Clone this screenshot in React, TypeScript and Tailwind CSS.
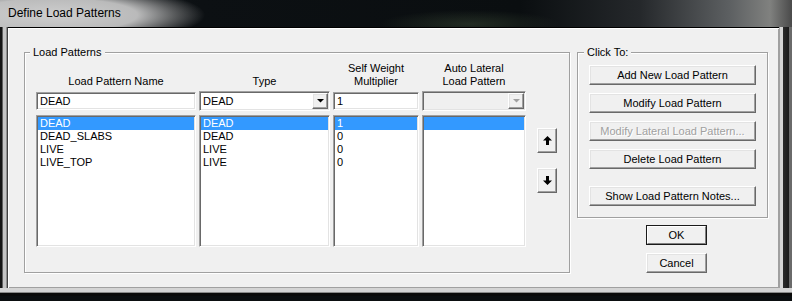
import React from "react";

const sunken =
  "border border-t-[#a0a0a0] border-l-[#a0a0a0] border-r-white border-b-white shadow-[inset_1px_1px_0_#696969,inset_-1px_-1px_0_#e3e3e3]";
const raised =
  "border border-t-white border-l-white border-r-[#696969] border-b-[#696969] shadow-[inset_-1px_-1px_0_#a0a0a0,inset_1px_1px_0_#e3e3e3] bg-[#f0f0f0]";
const etched =
  "border border-[#a0a0a0] shadow-[1px_1px_0_#ffffff,inset_1px_1px_0_#ffffff]";

function Btn({
  children,
  disabled,
  className = "",
}: {
  children: React.ReactNode;
  disabled?: boolean;
  className?: string;
}) {
  return (
    <div
      className={`${raised} flex items-center justify-center h-[20px] leading-none ${
        disabled
          ? "text-[#a0a0a0] [text-shadow:1px_1px_0_#ffffff]"
          : "text-black"
      } ${className}`}
    >
      {children}
    </div>
  );
}

function DownTri({ color = "#000" }: { color?: string }) {
  return (
    <svg width="7" height="4" viewBox="0 0 7 4">
      <polygon points="0,0 7,0 3.5,3.6" fill={color} />
    </svg>
  );
}

function Combo({ value, disabled }: { value: string; disabled?: boolean }) {
  return (
    <div
      className={`${sunken} h-[20px] flex items-stretch p-[1px] ${
        disabled ? "bg-[#f0f0f0]" : "bg-white"
      }`}
    >
      <div className="flex-1 flex items-center pl-[2px]">{value}</div>
      <div className={`${raised} w-[16px] flex items-center justify-center`}>
        <DownTri color={disabled ? "#a0a0a0" : "#000"} />
      </div>
    </div>
  );
}

function Edit({ value }: { value: string }) {
  return (
    <div className={`${sunken} h-[18px] bg-white flex items-center pl-[3px]`}>
      {value}
    </div>
  );
}

function List({ items, selected = 0, rows = 4 }: { items: string[]; selected?: number; rows?: number }) {
  const all = Array.from({ length: rows }, (_, i) => items[i] ?? "");
  return (
    <div className={`${sunken} h-full bg-white p-[1px]`}>
      {all.map((t, i) => (
        <div
          key={i}
          className={`h-[13px] leading-[13px] pl-[2px] whitespace-nowrap ${
            i === selected ? "bg-[#3399ff] text-white" : ""
          }`}
        >
          {t}
        </div>
      ))}
    </div>
  );
}

function ArrowBtn({ up }: { up?: boolean }) {
  return (
    <div className={`${raised} w-[20px] h-[25px] flex items-center justify-center`}>
      <svg width="9" height="9" viewBox="0 0 9 9">
        {up ? (
          <polygon points="4.5,0 9,4.5 6,4.5 6,9 3,9 3,4.5 0,4.5" fill="#000" />
        ) : (
          <polygon points="4.5,9 9,4.5 6,4.5 6,0 3,0 3,4.5 0,4.5" fill="#000" />
        )}
      </svg>
    </div>
  );
}

export default function App() {
  const cols = "grid grid-cols-[160px_131px_86px_104px_31px] gap-x-[3px]";
  return (
    <div className="w-[792px] h-[301px] overflow-hidden bg-[#0b0e10] font-['Liberation_Sans',Arial,sans-serif] text-[11px] text-black">
      {/* Title bar */}
      <div className="h-[27px] flex items-center pl-[8px] pb-[1px] text-[12px] text-black bg-[radial-gradient(ellipse_150px_30px_at_55px_15px,rgba(212,212,212,0.97)_0%,rgba(200,200,200,0.92)_55%,rgba(160,160,160,0.5)_80%,rgba(120,120,120,0)_100%),radial-gradient(ellipse_90px_14px_at_470px_24px,rgba(80,100,70,0.35)_0%,rgba(80,100,70,0)_100%),linear-gradient(to_right,#5a5d60_0px,#1c2023_30px,#0c1013_200px,#0a0e10_520px,#25282b_640px,#5d6062_730px,#80817f_770px,#4a4a4a_792px)]">
        Define Load Patterns
      </div>

      <div className="flex h-[261px]">
        {/* left frame */}
        <div className="w-[8px] bg-[linear-gradient(to_right,#151515_0px,#151515_2px,#5f5f5f_2px,#5f5f5f_3px,#c4c4c4_3px,#c4c4c4_6px,#8f8f8f_6px,#8f8f8f_7px,#404040_7px)]" />

        {/* client */}
        <div className="w-[771px] bg-[#f0f0f0] border-t border-t-black shadow-[inset_1px_1px_0_#ffffff,inset_-1px_-1px_0_#a0a0a0]">
          <div className="flex pl-[16px] pt-[24px] gap-[7px]">
            {/* Load Patterns group */}
            <div className={`relative w-[546px] h-[221px] ${etched}`}>
              <span className="absolute -top-[7px] left-[5px] px-[3px] bg-[#f0f0f0] leading-[13px]">
                Load Patterns
              </span>
              <div className="pl-[11px] pt-[8px]">
                <div className={`${cols} h-[27px] items-end text-center leading-[13px]`}>
                  <div>Load Pattern Name</div>
                  <div>Type</div>
                  <div>
                    Self Weight
                    <br />
                    Multiplier
                  </div>
                  <div>
                    Auto Lateral
                    <br />
                    Load Pattern
                  </div>
                  <div />
                </div>
                <div className={`${cols} mt-[3px] h-[20px] items-center`}>
                  <Edit value="DEAD" />
                  <Combo value="DEAD" />
                  <Edit value="1" />
                  <Combo value="" disabled />
                  <div />
                </div>
                <div className={`${cols} mt-[4px] h-[132px]`}>
                  <List items={["DEAD", "DEAD_SLABS", "LIVE", "LIVE_TOP"]} />
                  <List items={["DEAD", "DEAD", "LIVE", "LIVE"]} />
                  <List items={["1", "0", "0", "0"]} />
                  <List items={[""]} rows={1} />
                  <div className="ml-[8px] pt-[13px] flex flex-col gap-[15px]">
                    <ArrowBtn up />
                    <ArrowBtn />
                  </div>
                </div>
              </div>
            </div>

            {/* Right column */}
            <div className="flex flex-col">
              <div className={`relative w-[191px] h-[166px] ${etched}`}>
                <span className="absolute -top-[7px] left-[6px] px-[3px] bg-[#f0f0f0] leading-[13px]">
                  Click To:
                </span>
                <div className="pl-[11px] pt-[12px] flex flex-col w-[178px]">
                  <Btn>Add New Load Pattern</Btn>
                  <Btn className="mt-[8px]">Modify Load Pattern</Btn>
                  <Btn className="mt-[8px]" disabled>
                    Modify Lateral Load Pattern...
                  </Btn>
                  <Btn className="mt-[8px]">Delete Load Pattern</Btn>
                  <Btn className="mt-[17px]">Show Load Pattern Notes...</Btn>
                </div>
              </div>
              <div className="ml-[69px] mt-[7px] flex flex-col gap-[8px]">
                <div className="w-[61px] h-[20px] border border-[#1a1a1a]">
                  <div className="h-full flex items-center justify-center border border-t-white border-l-white border-r-[#808080] border-b-[#808080] bg-[#f0f0f0] leading-none">
                    OK
                  </div>
                </div>
                <Btn className="w-[61px]">Cancel</Btn>
              </div>
            </div>
          </div>
        </div>

        {/* right frame */}
        <div className="w-[13px] bg-[linear-gradient(to_right,#a0a0a0_0px,#a0a0a0_1px,#d6d6d6_1px,#d6d6d6_4px,#2b2b2b_4px,#1a1a1a_10px,#6a6a6a_10px,#6a6a6a_13px)]" />
      </div>

      {/* bottom frame */}
      <div className="h-[13px] bg-[linear-gradient(to_bottom,#d4d4d4_0px,#d4d4d4_4px,#8a8a8a_4px,#8a8a8a_5px,#0a0a0a_5px,#0a0a0a_8px,#0b0e10_8px)]" />
    </div>
  );
}
